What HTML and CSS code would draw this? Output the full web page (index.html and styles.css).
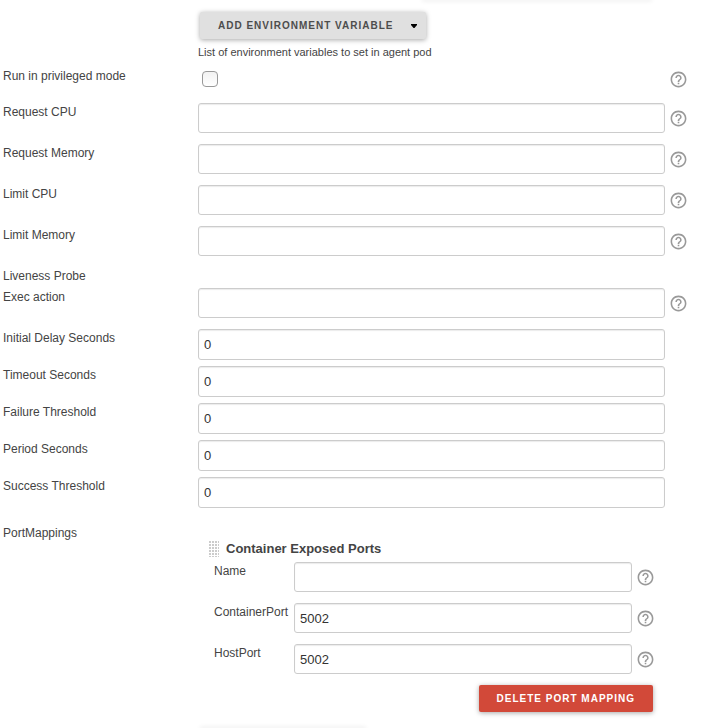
FILE: index.html
```html
<!DOCTYPE html>
<html lang="en">
  <head>
    <meta charset="UTF-8" />
    <title>Container Template</title>
    <link rel="stylesheet" href="styles.css">
  </head>
  <body>
    <svg class="sprite" aria-hidden="true">
      <symbol id="icon-help" viewBox="0 0 24 24">
        <path d="M11 18h2v-2h-2v2zm1-16C6.48 2 2 6.480 2 12s4.480 10 10 10 10-4.480 10-10S17.520 2 12 2zm0 18c-4.410 0-8-3.590-8-8s3.590-8 8-8 8 3.590 8 8-3.590 8-8 8zm0-14c-2.210 0-4 1.790-4 4h2c0-1.100.9-2 2-2s2 .9 2 2c0 2-3 1.750-3 5h2c0-2.250 3-2.500 3-5 0-2.210-1.790-4-4-4z" />
      </symbol>
    </svg>

    <form class="config">
      <div class="edge edge-top"></div>

      <div class="row env-row">
        <div class="field">
          <button type="button" class="btn btn-menu">
            Add Environment Variable
            <svg class="caret" viewBox="0 0 6 4"><path d="M0 0h6v1L3.500 4h-1L0 1z" /></svg>
          </button>
          <div class="description">List of environment variables to set in agent pod</div>
        </div>
      </div>

      <div class="row check-row">
        <label for="privileged">Run in privileged mode</label>
        <div class="field"><input type="checkbox" id="privileged" /></div>
        <a class="help" href="#" aria-label="Help"><svg><use href="#icon-help" /></svg></a>
      </div>
      <div class="row">
        <label for="request-cpu">Request CPU</label>
        <input type="text" id="request-cpu" />
        <a class="help" href="#" aria-label="Help"><svg><use href="#icon-help" /></svg></a>
      </div>
      <div class="row">
        <label for="request-memory">Request Memory</label>
        <input type="text" id="request-memory" />
        <a class="help" href="#" aria-label="Help"><svg><use href="#icon-help" /></svg></a>
      </div>
      <div class="row">
        <label for="limit-cpu">Limit CPU</label>
        <input type="text" id="limit-cpu" />
        <a class="help" href="#" aria-label="Help"><svg><use href="#icon-help" /></svg></a>
      </div>
      <div class="row">
        <label for="limit-memory">Limit Memory</label>
        <input type="text" id="limit-memory" />
        <a class="help" href="#" aria-label="Help"><svg><use href="#icon-help" /></svg></a>
      </div>

      <!-- Liveness probe -->
      <div class="section-title">Liveness Probe</div>
      <div class="row">
        <label for="exec-action">Exec action</label>
        <input type="text" id="exec-action" />
        <a class="help" href="#" aria-label="Help"><svg><use href="#icon-help" /></svg></a>
      </div>
      <div class="row number-row">
        <label for="initial-delay">Initial Delay Seconds</label>
        <input type="text" inputmode="numeric" id="initial-delay" value="0" />
      </div>
      <div class="row number-row">
        <label for="timeout">Timeout Seconds</label>
        <input type="text" inputmode="numeric" id="timeout" value="0" />
      </div>
      <div class="row number-row">
        <label for="failure-threshold">Failure Threshold</label>
        <input type="text" inputmode="numeric" id="failure-threshold" value="0" />
      </div>
      <div class="row number-row">
        <label for="period">Period Seconds</label>
        <input type="text" inputmode="numeric" id="period" value="0" />
      </div>
      <div class="row number-row">
        <label for="success-threshold">Success Threshold</label>
        <input type="text" inputmode="numeric" id="success-threshold" value="0" />
      </div>

      <!-- Port mappings -->
      <div class="row ports-row">
        <div class="row-name">PortMappings</div>
        <div class="ports">
          <div class="ports-header">
            <span class="grip"></span>
            <b>Container Exposed Ports</b>
          </div>
          <div class="row">
            <label for="port-name">Name</label>
            <input type="text" id="port-name" />
            <a class="help" href="#" aria-label="Help"><svg><use href="#icon-help" /></svg></a>
          </div>
          <div class="row">
            <label for="container-port">ContainerPort</label>
            <input type="text" id="container-port" value="5002" />
            <a class="help" href="#" aria-label="Help"><svg><use href="#icon-help" /></svg></a>
          </div>
          <div class="row">
            <label for="host-port">HostPort</label>
            <input type="text" id="host-port" value="5002" />
            <a class="help" href="#" aria-label="Help"><svg><use href="#icon-help" /></svg></a>
          </div>
          <div class="ports-actions">
            <button type="button" class="btn btn-danger">Delete Port Mapping</button>
          </div>
        </div>
      </div>

      <div class="edge edge-bottom"></div>
    </form>
  </body>
</html>
```

FILE: styles.css
```css
body {
  margin: 0;
  background: #fff;
  color: #444;
  font-family: "Liberation Sans", Arial, Helvetica, sans-serif;
  font-size: 12px;
  line-height: 18px;
}
.sprite {
  display: none;
}
.config {
  padding-left: 3px;
  overflow: hidden;
}
.row {
  display: flex;
  align-items: flex-start;
  margin-bottom: 11px;
}
.row > label,
.row-name {
  flex: 0 0 195px;
}
.row > input,
.field {
  flex: 1;
  min-width: 0;
}
input[type="text"] {
  box-sizing: border-box;
  height: 30px;
  margin: 0;
  padding: 5px;
  border: 1px solid #ccc;
  border-radius: 3px;
  box-shadow: inset 0 1px 1px rgba(0, 0, 0, 0.08);
  font-family: inherit;
  font-size: 13px;
  color: #333;
}
input[type="checkbox"] {
  display: block;
  box-sizing: border-box;
  width: 16px;
  height: 16px;
  margin: 4px;
  appearance: none;
  border: 1px solid #999;
  border-radius: 4px;
  background: linear-gradient(#f2f2f2, #fff);
}
input[type="checkbox"]:checked {
  background: #888;
}
.help {
  display: flex;
  flex: 0 0 33px;
  align-self: center;
  margin-left: 5px;
}
.help svg {
  width: 19px;
  height: 19px;
  margin-left: -1px;
  fill: #999;
}
.btn {
  height: 27px;
  padding: 0 18px;
  border: none;
  border-radius: 2px;
  box-shadow: 0 1px 5px rgba(0, 0, 0, 0.35);
  font-family: inherit;
  font-size: 10px;
  font-weight: bold;
  letter-spacing: 1px;
  text-transform: uppercase;
  cursor: pointer;
}
.btn-menu {
  display: flex;
  align-items: center;
  gap: 18px;
  margin-left: 2px;
  padding-right: 9px;
  background: #e0e0e0;
  color: #4d4d4d;
}
.caret {
  width: 6px;
  height: 4px;
  fill: #000;
}
.btn-danger {
  background: #d24939;
  color: #fff;
}
.env-row {
  margin-bottom: 6px;
  padding: 12px 38px 0 195px;
}
.description {
  margin-top: 4px;
  font-size: 11px;
}
.check-row {
  margin-bottom: 12px;
}
.section-title {
  margin-bottom: 3px;
}
.number-row {
  margin-bottom: 6px;
  padding-right: 38px;
}
.number-row > input[type="text"] {
  height: 31px;
}

/* port mappings */
.ports-row {
  margin: 16px 0 0;
}
.ports {
  flex: 1;
  min-width: 0;
  padding: 16px 33px 16px 16px;
}
.ports .row > label {
  flex-basis: 80px;
}
.ports-header {
  display: flex;
  align-items: center;
  gap: 7px;
  margin: 0 0 4px -5px;
  font-size: 13px;
}
.grip {
  width: 10px;
  height: 16px;
  background: repeating-linear-gradient(90deg, transparent 0 2px, #fff 2px 3px),
    repeating-linear-gradient(#ccc 0 2px, #fff 2px 3px);
}
.ports-actions {
  display: flex;
  justify-content: flex-end;
  padding-right: 17px;
}

/* shadows of the neighbouring buttons */
.edge {
  height: 0;
  box-shadow: 0 0 4px 1px rgba(0, 0, 0, 0.1);
}
.edge-top {
  width: 228px;
  margin: 0 52px 0 auto;
}
.edge-bottom {
  width: 164px;
  margin-left: 198px;
}
```
